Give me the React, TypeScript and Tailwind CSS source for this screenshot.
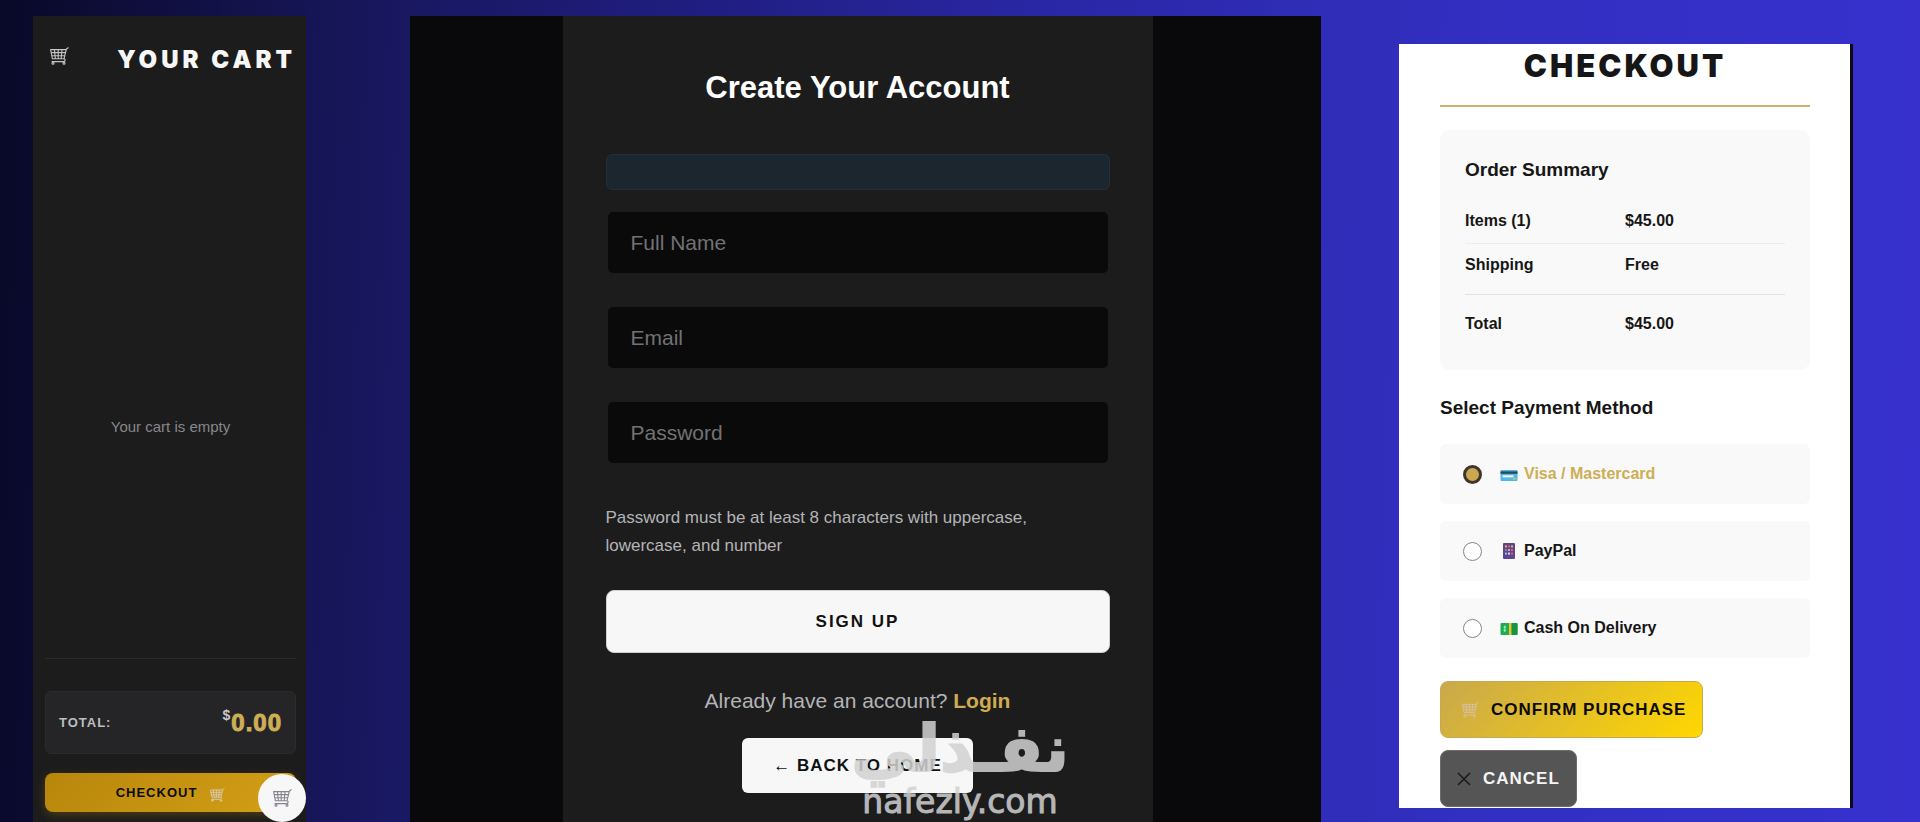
import React, { useState } from "react";

const CartIcon = ({ className = "" }: { className?: string }) => (
  <svg viewBox="0 0 20 18" fill="none" stroke="currentColor" strokeWidth="1.1" strokeLinecap="round" strokeLinejoin="round" className={className} aria-hidden="true">
    <path d="M19.2 0.8l-1.8 1.2-2.4 9.8H3.4L1.6 2.6h15.2M2.2 5.6h13.8M2.8 8.7h12.6M5.4 2.6l1 9.2M9.2 2.6v9.2M13 2.6l-.8 9.2M15 11.8c1.8.6 1.4 2.8-.4 2.8H3" />
    <circle cx="4" cy="16.2" r="1" />
    <circle cx="15" cy="16.2" r="1" />
  </svg>
);

const CardIcon = () => (
  <svg viewBox="0 0 18 18" className="size-[18px]" aria-hidden="true">
    <rect x="0.5" y="5" width="17" height="11" rx="1" fill="#55b5e6" />
    <rect x="0.5" y="6.4" width="17" height="2.4" fill="#274b5e" />
    <rect x="2.5" y="10.2" width="11" height="2.2" fill="#e6f2f8" />
    <rect x="12.8" y="13" width="3" height="1.6" fill="#b8cf6a" />
  </svg>
);

const PhoneIcon = () => (
  <svg viewBox="0 0 18 18" className="size-[18px]" aria-hidden="true">
    <rect x="3" y="1" width="12" height="16" rx="1" fill="#5b4694" />
    <rect x="5" y="3.4" width="2" height="2" fill="#f0b04c" />
    <rect x="8" y="3.4" width="2" height="2" fill="#e8604c" />
    <rect x="11" y="3.4" width="2" height="2" fill="#f0b04c" />
    <rect x="5" y="7" width="2" height="2" fill="#e8604c" />
    <rect x="8" y="7" width="2" height="2" fill="#7cc4f0" />
    <rect x="11" y="7" width="2" height="2" fill="#e8604c" />
    <rect x="5" y="10.6" width="2" height="2" fill="#7cc4f0" />
    <rect x="8" y="10.6" width="2" height="2" fill="#f0d0e0" />
    <rect x="11" y="10.6" width="2" height="2" fill="#e8604c" />
  </svg>
);

const CashIcon = () => (
  <svg viewBox="0 0 18 18" className="size-[18px]" aria-hidden="true">
    <rect x="0.5" y="4" width="17" height="12" rx="1" fill="#1fae4f" />
    <rect x="11" y="4" width="6.5" height="12" rx="1" fill="#17963f" />
    <rect x="9" y="4" width="2.4" height="12" fill="#f2c230" />
    <path d="M4.8 6.5v6.5M3.5 8.2h2.6M3.5 11.2h2.6" stroke="#a8eec0" strokeWidth="1" />
  </svg>
);

const methods = [
  { id: "card", label: "Visa / Mastercard", icon: <CardIcon /> },
  { id: "paypal", label: "PayPal", icon: <PhoneIcon /> },
  { id: "cash", label: "Cash On Delivery", icon: <CashIcon /> },
];

const CartPanel = () => (
  <aside className="relative col-start-2 mt-4 flex min-w-0 flex-col bg-[#1c1c1d] pr-[10px] pb-[10px] pl-3">
    <header className="flex h-[84px] items-center justify-between pt-1 pl-1">
      <CartIcon className="mb-2 h-[18px] w-5 text-[#c4c4c6]" />
      <h2 className="font-[Inter] text-2xl font-black tracking-[4px] whitespace-nowrap text-[#f7f7f7]">YOUR CART</h2>
    </header>
    <p className="flex flex-1 items-center justify-center pt-24 text-[15px] text-[#88888a]">Your cart is empty</p>
    <div className="border-t border-[#2b2b2d] pt-8">
      <div className="flex h-[63px] items-center justify-between rounded-md border border-[#2b2b2d] bg-[#252527] px-[13px]">
        <span className="text-[13px] font-bold tracking-[1px] text-[#bdbdbf]">TOTAL:</span>
        <span className="flex items-start text-2xl font-bold tracking-[1px] text-[#cdae56] [-webkit-text-stroke:1px]">
          <span className="text-sm leading-4 text-[#c9c9cb] [-webkit-text-stroke:0]">$</span>0.00
        </span>
      </div>
      <button className="mt-[19px] flex h-[39px] w-full items-center justify-center gap-3 rounded-lg bg-[linear-gradient(135deg,#b8860b,#d4a017)] text-[13px] font-bold tracking-[1px] text-[#0b0b0b] shadow-[0_3px_10px_rgba(184,134,11,0.3)]">
        CHECKOUT
        <CartIcon className="mt-1 h-[14px] w-4 text-[#d6cfbe]" />
      </button>
    </div>
    <button aria-label="Open cart" className="absolute right-0 bottom-0 flex size-12 items-center justify-center rounded-full bg-[#f7f7f7]">
      <CartIcon className="h-[18px] w-5 text-[#85858c]" />
    </button>
  </aside>
);

const Field = ({ label, type }: { label: string; type: string }) => (
  <input
    type={type}
    aria-label={label}
    placeholder={label}
    className="mx-[2px] h-[61px] rounded-[5px] bg-[#0a0a0b] px-[23px] text-[21px] text-white placeholder:text-[#727274]"
  />
);

const SignUpPanel = () => (
  <section className="col-start-4 mt-4 flex min-w-0 justify-center bg-[#09090b] pr-4">
    <form className="flex w-[590px] flex-col bg-[#1c1c1d] px-[43px]" onSubmit={(e) => e.preventDefault()}>
      <h1 className="mt-[52px] text-center text-[31px] leading-10 font-bold text-white">Create Your Account</h1>
      <div role="status" className="mt-[46px] h-9 rounded-md border border-[#1d323c] bg-[#1c262e]" />
      <div className="mt-[22px] flex flex-col gap-[34px]">
        <Field label="Full Name" type="text" />
        <Field label="Email" type="email" />
        <Field label="Password" type="password" />
      </div>
      <p className="mt-[41px] text-[17px] leading-7 text-[#b4b4b6]">Password must be at least 8 characters with uppercase, lowercase, and number</p>
      <button className="mt-[30px] h-[63px] rounded-lg border border-[#cfcfcf] bg-[#f7f7f7] text-[17px] font-bold tracking-[2px] text-[#111]">SIGN UP</button>
      <p className="mt-8 text-center text-[21px] leading-8 text-[#b4b4b6]">
        Already have an account? <a href="#login" className="font-bold text-[#d0ac50]">Login</a>
      </p>
      <button type="button" className="mt-[21px] h-[55px] self-center rounded-md bg-[#f7f7f7] px-[31px] text-[17px] font-bold tracking-[1px] whitespace-nowrap text-[#111]">← BACK TO HOME</button>
    </form>
  </section>
);

const CheckoutPanel = () => {
  const [method, setMethod] = useState("card");

  return (
    <section className="col-start-6 mt-11 min-w-0 self-start border-r-3 border-[#0c0c12] bg-white pr-10 pb-px pl-[41px] text-[#161616]">
      <h2 className="pt-1 pb-[21px] text-center font-[Inter] text-[31px] leading-9 font-black tracking-[3px]">CHECKOUT</h2>
      <div className="h-[2px] bg-[#cdb26a]" />
      <div className="mt-[23px] h-[240px] rounded-[10px] bg-[#f9f9f9] px-[25px] pt-[26px]">
        <h3 className="text-[19px] leading-7 font-bold">Order Summary</h3>
        <table className="mt-4 w-full table-fixed text-left text-base leading-6 font-bold">
          <tbody>
            <tr className="h-[43px] border-b border-[#ececec]">
              <th>Items (1)</th>
              <td>$45.00</td>
            </tr>
            <tr className="h-[51px] border-b border-[#e2e2e2] align-top">
              <th className="pt-[9px]">Shipping</th>
              <td className="pt-[9px]">Free</td>
            </tr>
            <tr className="h-[60px]">
              <th>Total</th>
              <td>$45.00</td>
            </tr>
          </tbody>
        </table>
      </div>
      <fieldset>
        <legend className="pt-6 pb-[22px] text-[19px] leading-7 font-bold">Select Payment Method</legend>
        <div className="flex flex-col gap-[17px]">
          {methods.map((m) => (
            <label key={m.id} className="flex h-[60px] items-center rounded-md bg-[#f9f9f9] pl-[23px] text-base font-bold has-checked:text-[#cdae56]">
              <input
                type="radio"
                name="method"
                checked={method === m.id}
                onChange={() => setMethod(m.id)}
                className="size-[19px] appearance-none rounded-full border border-[#858585] bg-white checked:border-3 checked:border-[#40352a] checked:bg-[#c9a850]"
              />
              <span className="mr-[6px] ml-[18px]">{m.icon}</span>
              {m.label}
            </label>
          ))}
        </div>
      </fieldset>
      <div className="mt-[23px] flex flex-col items-start gap-3">
        <button className="flex h-[57px] items-center gap-3 rounded-lg border border-[#c9a94e] bg-[linear-gradient(135deg,#c9a84c,#ffd700)] pr-4 pl-5 text-[17px] font-bold tracking-[1px] whitespace-nowrap text-[#0d0b05]">
          <CartIcon className="h-[16px] w-[18px] text-[#d8bfa4]" />
          CONFIRM PURCHASE
        </button>
        <button className="flex h-[57px] items-center gap-3 rounded-lg border border-[#6c6c6c] bg-[#555] px-4 text-[17px] font-bold tracking-[1px] text-[#f5f5f5]">
          <svg viewBox="0 0 14 14" className="size-[14px]" aria-hidden="true">
            <path d="M1 1l12 12M13 1L1 13" stroke="#1c1c1c" strokeWidth="1.6" />
          </svg>
          CANCEL
        </button>
      </div>
    </section>
  );
};

const App = () => {
  return (
    <main className="relative grid min-h-screen grid-cols-[33fr_273fr_104fr_911fr_78fr_454fr_67fr] overflow-hidden bg-[linear-gradient(92deg,#090928_0%,#17165a_18%,#211f85_38%,#2a27a6_54%,#322fc0_75%,#3730ce_100%)] font-['Liberation_Sans',sans-serif]">
      <CartPanel />
      <SignUpPanel />
      <CheckoutPanel />
      <div className="pointer-events-none absolute bottom-0 left-1/2 flex -translate-x-1/2 flex-col items-center text-[#d2d2d2] opacity-85">
        <span dir="rtl" lang="ar" className="font-['DejaVu_Sans',sans-serif] text-[64px] leading-[66px] font-bold [-webkit-text-stroke:2px]">نفـذلي</span>
        <span className="font-['DejaVu_Sans',sans-serif] text-[33px] leading-10 [-webkit-text-stroke:1px]">nafezly.com</span>
      </div>
    </main>
  );
};

export default App;
